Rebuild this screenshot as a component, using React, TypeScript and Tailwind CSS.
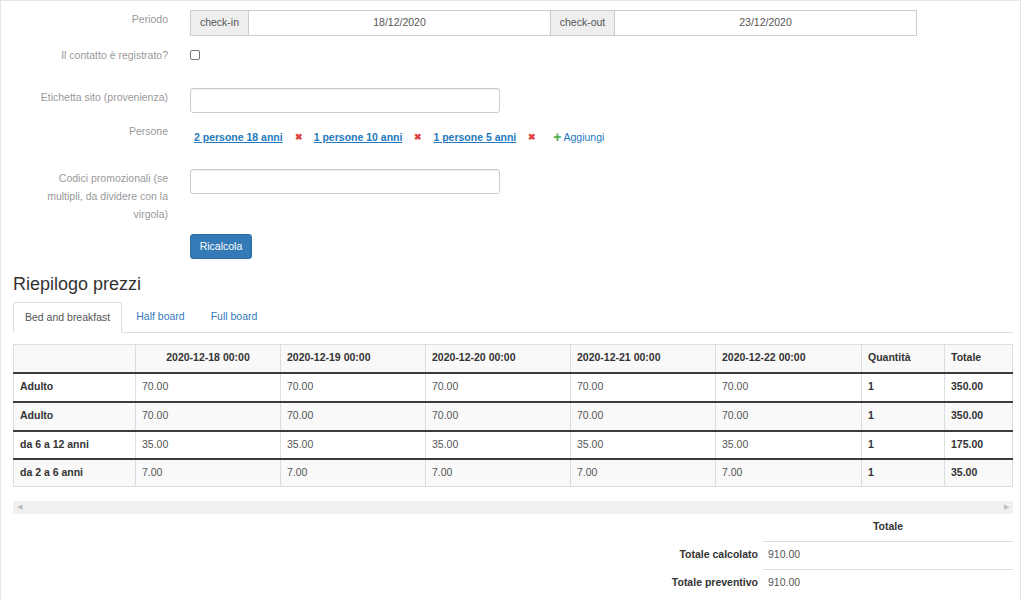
import React from "react";

const dates = [
  "2020-12-18 00:00",
  "2020-12-19 00:00",
  "2020-12-20 00:00",
  "2020-12-21 00:00",
  "2020-12-22 00:00",
];

const rows = [
  { label: "Adulto", v: "70.00", q: "1", t: "350.00", bg: "bg-white", h: "h-[29px]" },
  { label: "Adulto", v: "70.00", q: "1", t: "350.00", bg: "bg-[#f9f9f9]", h: "h-[29px]" },
  { label: "da 6 a 12 anni", v: "35.00", q: "1", t: "175.00", bg: "bg-white", h: "h-[28px]" },
  { label: "da 2 a 6 anni", v: "7.00", q: "1", t: "35.00", bg: "bg-[#f9f9f9]", h: "h-[28px]" },
];

const people = ["2 persone 18 anni", "1 persone 10 anni", "1 persone 5 anni"];

function Label({ children }: { children: React.ReactNode }) {
  return (
    <div className="w-[156px] shrink-0 text-right text-[10.5px] leading-[18px] text-[#999]">
      {children}
    </div>
  );
}

export default function App() {
  return (
    <div className="w-[1021px] min-h-[600px] border-l border-t border-r border-[#e6e6e6] bg-white font-['Liberation_Sans',Arial,sans-serif] text-[10.5px] text-[#333]">
      <div className="pl-[11px] pt-[9px] w-[1012px]">
        {/* Periodo */}
        <div className="flex gap-[22px]">
          <Label>Periodo</Label>
          <div className="flex h-[26px] w-[727px] border border-[#ccc]">
            <div className="w-[58px] shrink-0 flex items-center justify-center bg-[#eee] border-r border-[#ccc] text-[#555]">
              check-in
            </div>
            <div className="w-[301px] shrink-0 flex items-center justify-center text-[#555]">
              18/12/2020
            </div>
            <div className="w-[65px] shrink-0 flex items-center justify-center bg-[#eee] border-l border-r border-[#ccc] text-[#555]">
              check-out
            </div>
            <div className="flex-1 flex items-center justify-center text-[#555]">
              23/12/2020
            </div>
          </div>
        </div>

        {/* Contatto registrato */}
        <div className="flex gap-[22px] mt-[10px] h-[18px]">
          <Label>Il contatto è registrato?</Label>
          <div className="mt-[4px] w-[10px] h-[10px] rounded-[2px] border border-[#767676] bg-white" />
        </div>

        {/* Etichetta sito */}
        <div className="flex gap-[22px] mt-[24px]">
          <Label>Etichetta sito (provenienza)</Label>
          <div className="w-[310px] h-[25px] rounded-[3px] border border-[#ccc] shadow-[inset_0_1px_1px_rgba(0,0,0,0.075)]" />
        </div>

        {/* Persone */}
        <div className="flex gap-[22px] mt-[9px]">
          <Label>Persone</Label>
          <div className="flex items-center pt-[8px] pl-[4px] leading-[14px]">
            {people.map((p, i) => (
              <React.Fragment key={p}>
                <span className={`font-bold underline text-[#2479bd] ${i > 0 ? "ml-[11px]" : ""}`}>
                  {p}
                </span>
                <span className="ml-[12px] text-[9px] font-bold text-[#e0413a]">✖</span>
              </React.Fragment>
            ))}
            <span className="ml-[17px] text-[14px] font-bold leading-[14px] text-[#4cae4c]">+</span>
            <span className="ml-[2px] text-[#2479bd]">Aggiungi</span>
          </div>
        </div>

        {/* Codici promozionali */}
        <div className="flex gap-[22px] mt-[25px]">
          <Label>
            Codici promozionali (se
            <br />
            multipli, da dividere con la
            <br />
            virgola)
          </Label>
          <div className="w-[310px] h-[25px] rounded-[3px] border border-[#ccc] shadow-[inset_0_1px_1px_rgba(0,0,0,0.075)]" />
        </div>

        {/* Ricalcola */}
        <div className="flex gap-[22px] mt-[11px]">
          <div className="w-[156px] shrink-0" />
          <button className="w-[62px] h-[25px] rounded-[3px] bg-[#337ab7] border border-[#2e6da4] text-white text-[10.5px]">
            Ricalcola
          </button>
        </div>

        {/* Heading */}
        <h2 className="ml-[1px] mt-[15px] text-[18px] leading-[20px] text-[#333] font-normal">
          Riepilogo prezzi
        </h2>

        {/* Tabs */}
        <div className="ml-[1px] mt-[8px] flex border-b border-[#ddd] h-[31px] w-[1000px]">
          <div className="mr-[2px] px-[11px] h-[31px] flex items-center border border-[#ddd] border-b-white bg-white rounded-t-[3px] text-[#555] -mb-px">
            Bed and breakfast
          </div>
          <div className="mr-[2px] px-[11px] h-[30px] flex items-center border border-transparent text-[#337ab7]">
            Half board
          </div>
          <div className="mr-[2px] px-[11px] h-[30px] flex items-center border border-transparent text-[#337ab7]">
            Full board
          </div>
        </div>

        {/* Price table */}
        <table className="ml-[1px] mt-[11px] w-[999px] table-fixed border-collapse border border-[#ddd]">
          <colgroup>
            <col className="w-[122px]" />
            <col className="w-[145px]" />
            <col className="w-[145px]" />
            <col className="w-[145px]" />
            <col className="w-[145px]" />
            <col className="w-[146px]" />
            <col className="w-[83px]" />
            <col className="w-[68px]" />
          </colgroup>
          <thead>
            <tr className="h-[28px] bg-[#f9f9f9] border-b-2 border-[#3c3c3c]">
              <th className="border-r border-[#ddd]" />
              {dates.map((d, i) => (
                <th
                  key={d}
                  className={`border-r border-[#ddd] px-[6px] font-bold ${i === 0 ? "text-center" : "text-left"}`}
                >
                  {d}
                </th>
              ))}
              <th className="border-r border-[#ddd] px-[6px] text-left font-bold">Quantità</th>
              <th className="px-[6px] text-left font-bold">Totale</th>
            </tr>
          </thead>
          <tbody>
            {rows.map((r, idx) => (
              <tr
                key={idx}
                className={`${r.h} ${r.bg} ${idx < rows.length - 1 ? "border-b-2 border-[#3c3c3c]" : ""}`}
              >
                <td className="border-r border-[#ddd] px-[6px] font-bold">{r.label}</td>
                {dates.map((d) => (
                  <td key={d} className="border-r border-[#ddd] px-[6px] text-[#555]">
                    {r.v}
                  </td>
                ))}
                <td className="border-r border-[#ddd] px-[6px] font-bold">{r.q}</td>
                <td className="px-[6px] font-bold">{r.t}</td>
              </tr>
            ))}
          </tbody>
        </table>

        {/* Scrollbar */}
        <div className="ml-[1px] mt-[14px] h-[13px] w-[1000px] bg-[#f1f1f1] flex items-center justify-between px-[4px] text-[7px] text-[#bbb]">
          <span>◀</span>
          <span>▶</span>
        </div>

        {/* Summary */}
        <div className="flex justify-end w-[1001px]">
          <table className="border-collapse">
            <tbody>
              <tr className="h-[27px]">
                <td className="w-[200px]" />
                <td className="w-[250px] text-center font-bold">Totale</td>
              </tr>
              <tr className="h-[28px]">
                <td className="pr-[5px] text-right font-bold">Totale calcolato</td>
                <td className="border-t border-[#ddd] pl-[5px] text-[#555]">910.00</td>
              </tr>
              <tr className="h-[28px]">
                <td className="pr-[5px] text-right font-bold">Totale preventivo</td>
                <td className="border-t border-[#ddd] pl-[5px] text-[#555]">910.00</td>
              </tr>
            </tbody>
          </table>
        </div>
      </div>
    </div>
  );
}
